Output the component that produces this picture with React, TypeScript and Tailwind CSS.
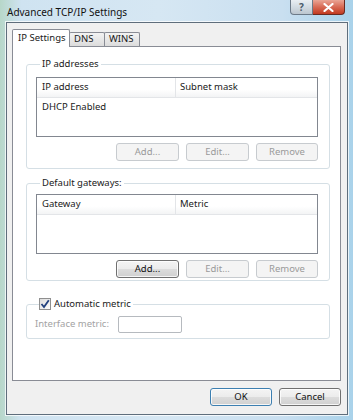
import React from 'react';

const font = { fontFamily: '"Noto Sans", "Open Sans", Arial, sans-serif' };

const Btn = ({ label, disabled, primary, className = '' }: { label: string; disabled?: boolean; primary?: boolean; className?: string }) => {
  if (disabled) {
    return (
      <div className={`h-[18px] flex items-center justify-center rounded-[3px] border border-[#c7cbcf] bg-[#f4f4f4] text-[#9a9a9a] ${className}`}>
        {label}
      </div>
    );
  }
  return (
    <div
      className={`h-[18px] flex items-center justify-center rounded-[3px] border text-[#111] bg-[linear-gradient(#f4f4f4_0%,#ececec_48%,#dcdcdc_52%,#d0d0d0_100%)] shadow-[inset_0_0_0_1px_rgba(255,255,255,0.8)] ${
        primary ? 'border-[#3c7fb1] shadow-[inset_0_0_0_1px_#aee0f5]' : 'border-[#707070]'
      } ${className}`}
    >
      {label}
    </div>
  );
};

const ListBox = ({ cols, rows }: { cols: [string, string]; rows: string[] }) => (
  <div className="w-[282px] h-[60px] border border-[#828790] bg-white flex flex-col">
    <div className="h-[20px] flex border-b border-[#e3e5e8] bg-[linear-gradient(#ffffff_0%,#ffffff_60%,#f3f4f5_100%)]">
      <div className="w-[139px] pl-[5px] flex items-center border-r border-[#e3e5e8]">{cols[0]}</div>
      <div className="flex-1 pl-[4px] flex items-center">{cols[1]}</div>
    </div>
    {rows.map((r) => (
      <div key={r} className="h-[18px] pl-[5px] flex items-center">{r}</div>
    ))}
  </div>
);

const ButtonRow = ({ addEnabled }: { addEnabled?: boolean }) => (
  <div className="w-[282px] flex justify-end gap-[7px]">
    <Btn label="Add..." disabled={!addEnabled} className="w-[63px]" />
    <Btn label="Edit..." disabled className="w-[63px]" />
    <Btn label="Remove" disabled className="w-[62px]" />
  </div>
);

export default function App() {
  return (
    <div
      className="w-[353px] h-[420px] overflow-hidden flex flex-col text-[9.5px] text-[#1a1a1a] bg-[linear-gradient(90deg,#b7d7c9_0%,#cfe3f1_6%,#d6e7f3_45%,#c9dff0_80%,#a9d2ea_100%)]"
      style={font}
    >
      {/* title bar */}
      <div className="h-[22px] flex items-start shrink-0">
        <div className="pl-[7px] pt-[5px] text-[10px] text-[#111]">Advanced TCP/IP Settings</div>
        <div className="ml-auto mr-[8px] flex">
          <div className="w-[23px] h-[15px] rounded-bl-[4px] border border-t-0 border-[#6c7a88] bg-[linear-gradient(#e9eef2_0%,#d2dbe2_50%,#bcc6cf_100%)] flex items-center justify-center text-[#4a5a6a] text-[10px] font-bold">
            ?
          </div>
          <div className="w-[32px] h-[15px] rounded-br-[4px] border border-t-0 border-l-0 border-[#6a2a20] bg-[linear-gradient(#eaa595_0%,#d86a55_50%,#c23a20_100%)] flex items-center justify-center">
            <svg width="11" height="9" viewBox="0 0 11 9">
              <path d="M1.5 1 L9.5 8 M9.5 1 L1.5 8" stroke="#fff" strokeWidth="2.2" strokeLinecap="round" />
            </svg>
          </div>
        </div>
      </div>

      {/* client area */}
      <div className="ml-[6px] w-[342px] h-[393px] border border-[#5f6e7c] shadow-[0_0_0_1px_rgba(255,255,255,0.75)] bg-[#f0f0f0] pl-[5px] pt-[6px] flex flex-col">
        {/* tabs */}
        <div className="flex items-end h-[17px]">
          <div className="relative z-10 w-[58px] h-[18px] -mb-px border border-b-0 border-[#898c95] bg-white rounded-t-[2px] pl-[5px] flex items-center">
            IP Settings
          </div>
          <div className="w-[36px] h-[14px] -ml-px border border-b-0 border-[#898c95] rounded-t-[2px] bg-[linear-gradient(#f3f3f3,#dcdcdc)] pl-[4px] flex items-center">
            DNS
          </div>
          <div className="w-[36px] h-[14px] -ml-px border border-b-0 border-[#898c95] rounded-t-[2px] bg-[linear-gradient(#f3f3f3,#dcdcdc)] pl-[4px] flex items-center">
            WINS
          </div>
        </div>

        {/* panel */}
        <div className="w-[329px] h-[335px] border border-[#898c95] bg-white pt-[9px] pl-[13px] flex flex-col">
          <fieldset className="w-[304px] h-[113px] border border-[#d5dfe5] rounded-[3px] pl-[9px]">
            <legend className="ml-[4px] px-[2px] h-[16px] leading-[16px]">IP addresses</legend>
            <div className="mt-[5px]">
              <ListBox cols={['IP address', 'Subnet mask']} rows={['DHCP Enabled']} />
            </div>
            <div className="mt-[6px]">
              <ButtonRow />
            </div>
          </fieldset>

          <fieldset className="mt-[6px] w-[304px] h-[106px] border border-[#d5dfe5] rounded-[3px] pl-[9px]">
            <legend className="ml-[4px] px-[2px] h-[16px] leading-[16px]">Default gateways:</legend>
            <div className="mt-[3px]">
              <ListBox cols={['Gateway', 'Metric']} rows={[]} />
            </div>
            <div className="mt-[6px]">
              <ButtonRow addEnabled />
            </div>
          </fieldset>

          <fieldset className="mt-[16px] w-[304px] h-[42px] border border-[#d5dfe5] rounded-[3px] pl-[8px]">
            <legend className="ml-[4px] pr-[2px] h-[14px] flex items-center gap-[3px]">
              <span className="w-[12px] h-[12px] border border-[#8f8f8f] bg-[linear-gradient(135deg,#dcdcdc,#fbfbfb)] flex items-center justify-center">
                <svg width="10" height="10" viewBox="0 0 10 10">
                  <path d="M1.5 5 L4 8 L8.8 1.2" fill="none" stroke="#21407e" strokeWidth="1.8" />
                </svg>
              </span>
              <span>Automatic metric</span>
            </legend>
            <div className="mt-[5px] flex items-center">
              <span className="w-[83px] text-[#a3a3a3]">Interface metric:</span>
              <div className="w-[64px] h-[17px] border border-[#b6babf] rounded-[2px] bg-white" />
            </div>
          </fieldset>
        </div>

        {/* footer */}
        <div className="mt-[7px] w-[329px] flex justify-end gap-[7px]">
          <Btn label="OK" primary className="w-[62px]" />
          <Btn label="Cancel" className="w-[62px]" />
        </div>
      </div>
    </div>
  );
}
